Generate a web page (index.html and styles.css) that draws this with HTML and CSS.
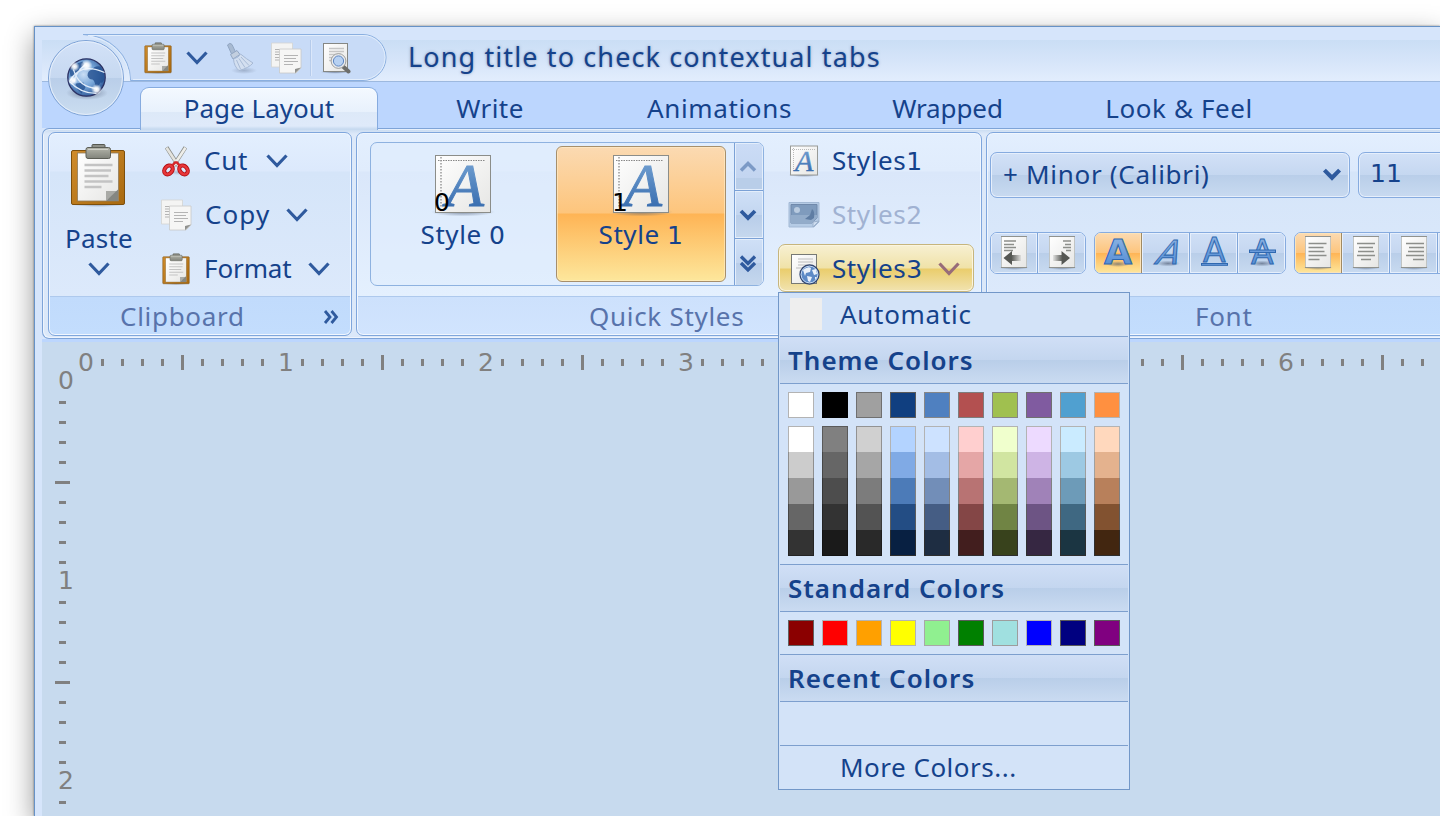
FILE: index.html
```html
<!DOCTYPE html>
<html lang="en">
<head>
<meta charset="utf-8">
<title>Long title to check contextual tabs</title>
<link rel="stylesheet" href="styles.css">
</head>
<body>
<svg class="defs" width="0" height="0" aria-hidden="true">
  <defs>
    <linearGradient id="paper" x1="0" y1="0" x2="1" y2="1"><stop offset="0" stop-color="#ffffff"/><stop offset="1" stop-color="#e6e6e4"/></linearGradient>
    <linearGradient id="board" x1="0" y1="0" x2="1" y2="1"><stop offset="0" stop-color="#d08c2c"/><stop offset="1" stop-color="#a8690f"/></linearGradient>
    <linearGradient id="metal" x1="0" y1="0" x2="0" y2="1"><stop offset="0" stop-color="#b4b5aa"/><stop offset="1" stop-color="#81837b"/></linearGradient>
    <linearGradient id="ink" x1="0" y1="0" x2="0" y2="1"><stop offset="0" stop-color="#7daad8"/><stop offset="1" stop-color="#2c62a8"/></linearGradient>
    <linearGradient id="letter" x1="0" y1="0" x2="0" y2="1"><stop offset="0" stop-color="#92b7e4"/><stop offset="1" stop-color="#4a86d2"/></linearGradient>
    <linearGradient id="fadeL" x1="0" y1="0" x2="1" y2="0"><stop offset=".45" stop-color="#555753"/><stop offset="1" stop-color="#555753" stop-opacity=".1"/></linearGradient>
    <linearGradient id="fadeR" x1="1" y1="0" x2="0" y2="0"><stop offset=".45" stop-color="#555753"/><stop offset="1" stop-color="#555753" stop-opacity=".1"/></linearGradient>
    <linearGradient id="orb" x1="0" y1="0" x2="0" y2="1"><stop offset="0" stop-color="#d3e2f8"/><stop offset=".5" stop-color="#c6d8f0"/><stop offset=".5" stop-color="#b9cee9"/><stop offset="1" stop-color="#cbddf0"/></linearGradient>
    <radialGradient id="sea" cx=".42" cy=".42" r=".65"><stop offset="0" stop-color="#c9def5"/><stop offset=".5" stop-color="#76a5d8"/><stop offset="1" stop-color="#27508f"/></radialGradient>
    <radialGradient id="glow"><stop offset="0" stop-color="#fff"/><stop offset=".4" stop-color="#fff" stop-opacity=".85"/><stop offset="1" stop-color="#fff" stop-opacity="0"/></radialGradient>
    <radialGradient id="shade"><stop offset="0" stop-color="#44516a" stop-opacity=".6"/><stop offset="1" stop-color="#44516a" stop-opacity="0"/></radialGradient>
    <symbol id="i-clipboard" viewBox="0 0 60 64">
      <ellipse cx="30" cy="61" rx="29" ry="3" fill="url(#shade)"/>
      <rect x="3.500" y="7.500" width="53" height="54" rx="1.5" fill="url(#board)" stroke="#7d4f0c"/>
      <rect x="9.500" y="10" width="41" height="48" fill="url(#paper)" stroke="#8f7c5c" stroke-width=".8"/>
      <path d="M16.500 22h28M16.500 27.500h26.500M16.500 33h24M16.500 38.500h28M16.500 44h17" stroke="#c3c3c3" stroke-width="2.400"/>
      <path d="M38 58V48H50.500Z" fill="#a9aaa6"/><path d="M38 58L50 46.500V58Z" fill="#858782"/>
      <rect x="24" y="1.500" width="13" height="6" rx="1" fill="#8f9189" stroke="#55574f"/>
      <rect x="18" y="4.500" width="24.500" height="11" rx="2" fill="url(#metal)" stroke="#5c5e56"/>
      <path d="M20 6.500h20" stroke="#cfd0c8"/>
    </symbol>
    <symbol id="i-copy" viewBox="0 0 32 32">
      <path d="M1.500 1h21v24h-21z" fill="#f4f4f3" stroke="#d4d4d2" stroke-width=".8"/>
      <path d="M5 7.500h11M5 10h11M5 12.500h11M5 15.500h8M5 18h6" stroke="#b4b4b4"/>
      <path d="M9.500 7h21.500v19l-5 5H9.500z" fill="#f6f6f5" stroke="#c9c9c6" stroke-width=".8"/>
      <path d="M14 13.500h14M14 16.500h12M14 19.500h14M14 22.500h9" stroke="#b4b4b4"/>
      <path d="M25 31.200V27l6-1.500z" fill="#90918e"/>
    </symbol>
    <symbol id="i-cut" viewBox="0 0 32 34">
      <ellipse cx="18" cy="29" rx="9" ry="3" fill="url(#shade)" opacity=".5"/>
      <path d="M6 2.500L18.500 22" stroke="#888a85" stroke-width="4.200"/><path d="M26 2.500L13.500 22" stroke="#888a85" stroke-width="4.200"/>
      <path d="M6 3L18.500 22" stroke="#e4e4df" stroke-width="2.800"/><path d="M26 3L13.500 22" stroke="#eeeeea" stroke-width="2.800"/>
      <g fill="none" stroke="#b10f14" stroke-width="4.400"><ellipse cx="8" cy="26.500" rx="3.900" ry="5.200" transform="rotate(42 8 26.500)"/><ellipse cx="24" cy="26.500" rx="3.900" ry="5.200" transform="rotate(-42 24 26.500)"/></g>
      <g fill="none" stroke="#e8373a" stroke-width="2.600"><ellipse cx="8" cy="26.500" rx="3.900" ry="5.200" transform="rotate(42 8 26.500)"/><ellipse cx="24" cy="26.500" rx="3.900" ry="5.200" transform="rotate(-42 24 26.500)"/></g>
      <path d="M12 22l3-3.500h2l3 3.500" fill="none" stroke="#d4262a" stroke-width="2.600"/>
    </symbol>
    <symbol id="i-brush" viewBox="0 0 32 32">
      <ellipse cx="19" cy="28.500" rx="13" ry="3.500" fill="url(#shade)" opacity=".5"/>
      <path d="M2.500 3Q5 0 7 2.500L11 11l-4 2z" fill="#a8bad2" stroke="#91a6c3"/>
      <path d="M5.500 12.500L12 8.500l3 4-7 4.500z" fill="#c3cfdf" stroke="#93a7c3"/>
      <path d="M8.500 17Q14 15.500 15.500 12q6 5 12.500 9-4 5-14 7.500-5-4-5.500-11.500z" fill="#d3dff0" stroke="#a6b9d5"/>
      <path d="M11.500 18l4 9M14 16.500l6 9M16 15l8 8.500" stroke="#a9bbd6" fill="none"/>
    </symbol>
    <symbol id="i-preview" viewBox="0 0 32 32">
      <ellipse cx="15" cy="30" rx="15" ry="1.800" fill="url(#shade)"/>
      <rect x="3.500" y="1.500" width="24" height="28" fill="url(#paper)" stroke="#858784"/>
      <path d="M9 6.500h15M9 9.500h15M9 12.500h12M9 15.500h9M9 18.500h9" stroke="#c6c6c6" stroke-width="1.400"/>
      <path d="M22.500 24l6 5.500" stroke="#6d6e6b" stroke-width="4" stroke-linecap="round"/>
      <circle cx="18.500" cy="19" r="6.300" fill="#b7d1f2" stroke="#e9ebee" stroke-width="2.400"/>
      <circle cx="18.500" cy="19" r="7.400" fill="none" stroke="#8a8c89" stroke-width=".8"/>
      <circle cx="18.500" cy="19" r="5.100" fill="none" stroke="#5d86c2"/>
    </symbol>
    <symbol id="i-style" viewBox="0 0 64 64">
      <ellipse cx="32" cy="59" rx="32" ry="4.500" fill="url(#shade)"/>
      <rect x="4.500" y="2.500" width="55" height="57" fill="url(#paper)" stroke="#8b8d89"/>
      <path d="M7 7.500h47" stroke="#888" stroke-dasharray="1.500 1"/><path d="M10 4v51" stroke="#999" stroke-width="1.500" stroke-dasharray="1.500 1.500"/>
      <text class="serif-a" x="15" y="52.500" font-size="62" fill="url(#ink)" stroke="url(#ink)">A</text>
    </symbol>
    <symbol id="i-style-small" viewBox="0 0 32 32">
      <ellipse cx="16" cy="30" rx="16" ry="2" fill="url(#shade)"/>
      <rect x="2.500" y="1" width="27" height="29" fill="url(#paper)" stroke="#989a97"/>
      <path d="M4 4.500h23M5.500 3v24" stroke="#aaa" stroke-width=".8" stroke-dasharray="1 1"/>
      <text class="serif-a" x="7" y="26" font-size="30" fill="url(#ink)" stroke="url(#ink)" stroke-width=".4">A</text>
    </symbol>
    <symbol id="i-image" viewBox="0 0 32 28">
      <path d="M1 1.500h30V21l-5 5H1z" fill="#b5cbe5" stroke="#a3b9d5"/>
      <path d="M3 3.500h26V17l-5 5H3z" fill="#7f9bbd" stroke="#7089ab"/>
      <path d="M3 14h26v3l-5 5H3z" fill="#93acca"/><circle cx="9" cy="9" r="3" fill="#b9cbe0"/>
      <path d="M17 18l5-4 2-6q3 2 2 9l-3 2z" fill="#5f7da3"/>
      <path d="M25 26v-5l6-1z" fill="#cfdef0" stroke="#9bb0cc"/>
    </symbol>
    <symbol id="i-earth" viewBox="0 0 40 40">
      <circle cx="20" cy="20" r="18.700" fill="url(#sea)" stroke="#2b3163" stroke-width="1.300"/>
      <path d="M21 18q0-5 5-6 2-4 8-3 4 5 4 12-1 5-4 4-3 6-5 3-1-5-3-6-4 0-5-4z" fill="#234f8e" opacity=".8"/>
      <path d="M3 13l5-6 8-3 2 3-5 4-3 6-6 2zM9 26l8-1 2 5-4 6-4-4z" fill="#234f8e" opacity=".75"/>
      <path d="M3 24Q14 4 38 15M7 12Q12 30 31 31M3 24Q14 36 30 36M20 6Q8 16 8 24" fill="none" stroke="#dfebf9" stroke-width="1.200"/>
      <circle cx="20" cy="8" r="6" fill="url(#glow)"/><circle cx="8" cy="9" r="5" fill="url(#glow)"/><circle cx="30" cy="32" r="5.500" fill="url(#glow)"/><circle cx="6.500" cy="23" r="5" fill="url(#glow)"/>
    </symbol>
    <symbol id="i-web" viewBox="0 0 32 32">
      <rect x="3.500" y="1.500" width="25" height="29" fill="url(#paper)" stroke="#777974"/>
      <path d="M10 6h15M10 9h15M10 12h15M8 15h9" stroke="#cfcfcf" stroke-width="1.400"/>
      <circle cx="21.500" cy="21.500" r="9.500" fill="#5d8ac6" stroke="#32466f" stroke-width="1.300"/>
      <circle cx="21.500" cy="21.500" r="8.400" fill="none" stroke="#c5d9f2"/>
      <path d="M15 17q5-4 8-2l-1 4-4 1-1 3zM24 17l4-1 1 5-3 1zM19 23l5 1-2 5-2-1zM27 24l2 0-2 3z" fill="#eaf1fa"/>
    </symbol>
    <symbol id="i-chev" viewBox="0 0 22 14"><path d="M1.500 1.500L11 11.500L20.500 1.500" fill="none" stroke="currentColor" stroke-width="3.200"/></symbol>
    <symbol id="i-chev-s" viewBox="0 0 18 12"><path d="M2 2L9 9L16 2" fill="none" stroke="currentColor" stroke-width="3.800"/></symbol>
    <symbol id="i-page" viewBox="0 0 32 36">
      <ellipse cx="16" cy="32.500" rx="15" ry="2.500" fill="url(#shade)"/>
      <rect x="3.500" y="1.500" width="25" height="31" fill="url(#paper)" stroke="#babcb8" stroke-width=".8"/><path d="M3 1.500h26M3 32.500h26" stroke="#90928e"/>
    </symbol>
  </defs>
</svg>

<div class="window">
  <header class="titlebar">
    <svg class="qat-shape" width="350" height="96" viewBox="41 27 350 96">
      <path d="M83 34.500H363A23 23 0 0 1 363 80.500H130.500A48 46 0 0 0 83 34.500Z" fill="#c8dbf7" stroke="#8aafe0"/>
      <path d="M88 35.500H363A22 22 0 0 1 363 79.500H133" fill="none" stroke="#e3eefc"/>
      <path d="M129.500 80A47 45 0 0 0 90 36.500" fill="none" stroke="#e3eefc"/>
      <circle cx="86" cy="78" r="37.500" fill="url(#orb)" stroke="#7da2d6"/>
      <circle cx="86" cy="78" r="36.400" fill="none" stroke="#e6effb"/>
      <ellipse cx="87" cy="93" rx="21" ry="7" fill="url(#shade)"/>
      <use href="#i-earth" x="66.500" y="57.500" width="40" height="40"/>
      <path d="M310.500 40v36" stroke="#b5cbeb"/><path d="M311.500 40v36" stroke="#dbe7fa"/>
    </svg>
    <div class="qat">
      <svg class="q-paste"><use href="#i-clipboard"/></svg>
      <svg class="chev q-chev"><use href="#i-chev"/></svg>
      <svg class="q-brush"><use href="#i-brush"/></svg>
      <svg class="q-copy"><use href="#i-copy"/></svg>
      <svg class="q-preview"><use href="#i-preview"/></svg>
    </div>
    <h1 class="title">Long title to check contextual tabs</h1>
  </header>

  <nav class="tabs">
    <a class="tab tab-layout selected">Page Layout</a>
    <a class="tab tab-write">Write</a>
    <a class="tab tab-anim">Animations</a>
    <a class="tab tab-wrapped">Wrapped</a>
    <a class="tab tab-look">Look &amp; Feel</a>
  </nav>

  <main class="ribbon">
    <section class="band band-clipboard">
      <div class="band-body">
        <div class="paste">
          <svg class="paste-icon"><use href="#i-clipboard"/></svg>
          <span class="lbl-paste">Paste</span>
          <svg class="chev"><use href="#i-chev"/></svg>
        </div>
        <div class="stack">
          <div class="cmd cmd-cut"><svg class="ic"><use href="#i-cut"/></svg><span>Cut</span><svg class="chev"><use href="#i-chev"/></svg></div>
          <div class="cmd cmd-copy"><svg class="ic"><use href="#i-copy"/></svg><span>Copy</span><svg class="chev"><use href="#i-chev"/></svg></div>
          <div class="cmd cmd-format"><svg class="ic"><use href="#i-clipboard"/></svg><span>Format</span><svg class="chev"><use href="#i-chev"/></svg></div>
        </div>
      </div>
      <div class="band-label"><span>Clipboard</span>
        <svg class="expand" viewBox="0 0 16 16"><path d="M2 2L7 8L2 14M8.500 2L13.500 8L8.500 14" fill="none" stroke="#2f5a9e" stroke-width="2.800"/></svg>
      </div>
    </section>

    <section class="band band-styles">
      <div class="band-body">
        <div class="gallery">
          <div class="style"><svg class="style-icon"><use href="#i-style"/></svg><b class="badge">0</b><span>Style <i class="d">0</i></span></div>
          <div class="style active"><svg class="style-icon"><use href="#i-style"/></svg><b class="badge">1</b><span>Style <i class="d">1</i></span></div>
          <div class="scroller">
            <button class="dim"><svg viewBox="0 0 18 12"><path d="M2 9.500L9 2.500L16 9.500" fill="none" stroke="currentColor" stroke-width="3.500"/></svg></button>
            <button><svg><use href="#i-chev-s"/></svg></button>
            <button><svg class="dbl" viewBox="0 0 18 18"><path d="M2 1.500L9 8.500L16 1.500M2 8L9 15L16 8" fill="none" stroke="currentColor" stroke-width="3.300"/></svg></button>
          </div>
        </div>
        <div class="stylelist">
          <div class="item"><svg class="ic"><use href="#i-style-small"/></svg><span>Styles<i class="d">1</i></span></div>
          <div class="item disabled"><svg class="ic ic-img"><use href="#i-image"/></svg><span>Styles<i class="d">2</i></span></div>
          <div class="item hot"><svg class="ic"><use href="#i-web"/></svg><span>Styles<i class="d">3</i></span><svg class="chev"><use href="#i-chev"/></svg></div>
        </div>
      </div>
      <div class="band-label"><span>Quick Styles</span></div>
    </section>

    <section class="band band-font">
      <div class="band-body">
        <div class="combos">
          <div class="combo family"><span>+ Minor (Calibri)</span><svg><use href="#i-chev-s"/></svg></div>
          <div class="combo size"><i class="d">11</i></div>
        </div>
        <div class="tools">
          <div class="strip">
            <button><svg viewBox="0 0 32 36"><use href="#i-page"/><path d="M6 6h12M6 9.500h10M6 12.500h12M6 15.500h9" stroke="#8d8f8b" stroke-width="1.300"/><path d="M5.500 23L14 16v4h9v6h-9v4z" fill="url(#fadeL)"/></svg></button>
            <button><svg viewBox="0 0 32 36"><use href="#i-page"/><path d="M17 6h8M19 9.500h6M17 12.500h8M20 15.500h5" stroke="#8d8f8b" stroke-width="1.300"/><path d="M24 23L15.500 16v4H7v6h8.500v4z" fill="url(#fadeR)"/></svg></button>
          </div>
          <div class="strip">
            <button class="on"><svg viewBox="0 0 32 36"><ellipse cx="16" cy="29" rx="12" ry="3" fill="url(#shade)"/><text class="fa" x="2" y="29" font-size="33" font-weight="bold" textLength="28" lengthAdjust="spacingAndGlyphs">A</text></svg></button>
            <button><svg viewBox="0 0 32 36"><ellipse cx="18" cy="28.500" rx="12" ry="3" fill="url(#shade)"/><text class="fa" x="0" y="0" font-size="33" transform="translate(3.500 29) skewX(-24)">A</text></svg></button>
            <button><svg viewBox="0 0 32 36"><text class="fa" x="5" y="26.500" font-size="33">A</text><rect x="3.500" y="28.500" width="26" height="1.800" fill="#6b9bdb" stroke="#2f68b0"/></svg></button>
            <button><svg viewBox="0 0 32 36"><ellipse cx="16" cy="28.500" rx="12" ry="3" fill="url(#shade)"/><text class="fa" x="5" y="29" font-size="33">A</text><rect x="3.500" y="15" width="26" height="2.500" fill="#6b9bdb" stroke="#2f68b0"/></svg></button>
          </div>
          <div class="strip">
            <button class="on"><svg viewBox="0 0 32 36"><use href="#i-page"/><path d="M6.500 8.500h18M6.500 12.500h15M6.500 16.500h16M6.500 20.500h18M6.500 24.500h11" stroke="#8d8f8b" stroke-width="1.300"/></svg></button>
            <button><svg viewBox="0 0 32 36"><use href="#i-page"/><path d="M7 8.500h18M9 12.500h14M8 16.500h16M7 20.500h18M11 24.500h10" stroke="#8d8f8b" stroke-width="1.300"/></svg></button>
            <button><svg viewBox="0 0 32 36"><use href="#i-page"/><path d="M8 8.500h18M11 12.500h15M10 16.500h16M8 20.500h18M15 24.500h11" stroke="#8d8f8b" stroke-width="1.300"/></svg></button>
            <button></button>
          </div>
        </div>
      </div>
      <div class="band-label"><span>Font</span></div>
    </section>
  </main>

  <div class="document">
    <div class="ruler ruler-h" id="ruler-h"></div>
    <div class="ruler ruler-v" id="ruler-v"></div>
  </div>

  <aside class="popup">
    <div class="row auto"><i class="chip"></i><span>Automatic</span></div>
    <h2 class="h-theme">Theme Colors</h2>
    <div class="swatches" id="theme"></div>
    <div class="columns" id="shades"></div>
    <h2 class="h-standard">Standard Colors</h2>
    <div class="swatches" id="standard"></div>
    <h2 class="h-recent">Recent Colors</h2>
    <div class="recent"></div>
    <div class="row more"><span>More Colors...</span></div>
  </aside>
</div>
<script src="app.js"></script>
</body>
</html>
```

FILE: styles.css
```css
* { box-sizing: border-box; }
body {
  margin: 0; width: 1440px; height: 816px; overflow: hidden; background: #fff;
  font: 26px/36px "Noto Sans", "Open Sans", "DejaVu Sans", sans-serif; color: #15428b;
}
h1, h2 { margin: 0; font-size: 26px; font-weight: 400; }
svg { display: block; flex: none; }
.defs { position: absolute; }
button { flex: none; margin: 0; padding: 0; border: 0; background: none; color: inherit; }
.d { font-family: "DejaVu Sans", sans-serif; font-style: normal; font-size: 25px; line-height: 0; }
.chev { width: 22px; height: 14px; color: #2f5a9e; }
.ic { width: 32px; height: 32px; }
.serif-a { font-family: "Liberation Serif", serif; font-style: italic; }
.fa { font-family: "DejaVu Sans", sans-serif; fill: url(#letter); stroke: #2f68b0; stroke-width: 1; }

.window {
  position: relative; display: flex; flex-direction: column; width: 1406px; height: 790px; margin: 26px 0 0 34px; padding-left: 7px;
  border: solid #6792c6; border-width: 1px 0 0 1px; background: #d6e5fb;
  box-shadow: 0 0 2px rgba(0,0,0,.45), 0 10px 26px rgba(0,0,0,.42);
}

.titlebar {
  position: relative; z-index: 2; display: flex; flex: none; height: 55px; border-bottom: 1px solid #9db9df;
  background: linear-gradient(#d6e5fb 13px, #cadef5 13px, #d5e4f9 60%, #e2edfd);
}
.qat-shape { position: absolute; left: -1px; top: 0; }
.qat { position: relative; display: flex; align-items: center; width: 366px; height: 62px; padding-left: 101px; }
.q-paste { width: 30px; height: 32px; }
.q-chev { margin-left: 13px; }
.q-brush { width: 32px; height: 32px; margin-left: 17px; }
.q-copy { width: 32px; height: 32px; margin-left: 13px; }
.q-preview { width: 32px; height: 32px; margin-left: 18px; }
.title { padding-top: 12px; font-size: 27px; letter-spacing: 1.12px; text-shadow: 0 0 3px rgba(90,110,150,.55); white-space: nowrap; }

.tabs { display: flex; flex: none; height: 46px; padding: 5px 0 0 98px; background: #bcd6fe; }
.tab { display: block; flex: none; height: 41px; padding-top: 3px; text-align: center; }
.tab.selected {
  position: relative; z-index: 1; height: 43px; width: 238px; border: 1px solid #86abdf; border-bottom: 0; border-radius: 9px 9px 0 0; padding-top: 2px;
  background: linear-gradient(#f4f9ff, #e8f1fc 24px, #dde9f8 24px, #dfeafa 38px, #c7daf0 41px); box-shadow: inset 0 1px #fafdff;
}
.tab-write { width: 224px; letter-spacing: .4px; }
.tab-anim { width: 235px; letter-spacing: .65px; }
.tab-wrapped { width: 221px; letter-spacing: -.1px; }
.tab-look { width: 242px; letter-spacing: .6px; }

.ribbon {
  display: flex; flex: none; gap: 4px; height: 211px; padding: 3px 0 0 5px; border: 1px solid #7ea4d8; border-right: 0; border-radius: 7px 0 0 7px;
  background: linear-gradient(#c7daf0, #dde9f9 5px, #dbe8f9); box-shadow: inset 0 1px #e6effb, inset 1px -1px #eef4fd; overflow: hidden;
}
.band { display: flex; flex: none; flex-direction: column; height: 204px; border: 1px solid #7fa6dc; border-radius: 7px; box-shadow: inset 0 0 0 1px #f0f6fe; overflow: hidden;
  background: linear-gradient(#e3effe, #dce9fc 38px, #d5e5f9 39px, #dce9fb 163px, #c1dbfc 164px, #c3ddfd); }
.band-clipboard { width: 304px; }
.band-styles { width: 626px; background: linear-gradient(#e3effe, #e0ecfc 38px, #dae7fa 39px, #e4f0fe 163px, #cde1fc 164px, #d1e4fe); }
.band-font { width: 480px; }
.band-body { display: flex; height: 163px; }
.band-label { position: relative; display: flex; height: 39px; margin: 0 1px; padding-top: 1px; border-top: 1px solid #aec9ed; color: #5873ab; letter-spacing: .7px; }
.band-clipboard .band-label { padding-left: 70px; }
.band-clipboard .band-label span { width: 203px; }
.band-styles .band-label { padding-left: 231px; }
.band-font .band-label { padding-left: 207px; }
.expand { width: 16px; height: 16px; margin-top: 11px; }

.paste { display: flex; flex-direction: column; align-items: center; width: 100px; padding-top: 10px; }
.paste-icon { width: 60px; height: 64px; margin-left: -2px; }
.lbl-paste { margin-top: 13px; letter-spacing: .2px; }
.paste .chev { margin-top: 6px; }
.stack { padding: 1px 0 0 11px; }
.cmd { display: flex; align-items: center; height: 54px; }
.cmd .ic { margin-right: 12px; }
.cmd span, .item span { position: relative; top: -1px; }
.cmd-cut span { width: 62px; letter-spacing: .7px; }
.cmd-copy span { width: 82px; padding-left: 1px; letter-spacing: 1.1px; }
.cmd-format span { width: 104px; letter-spacing: -.1px; }

.gallery { display: flex; flex: none; width: 394px; height: 144px; margin: 9px 0 0 13px; padding-left: 7px; border: 1px solid #8eb2e0; border-radius: 7px; background: rgba(224,236,253,.6); overflow: hidden; }
.style { position: relative; display: flex; flex: none; flex-direction: column; align-items: center; width: 170px; height: 136px; margin: 3px 8px 0 0; padding-top: 6px; border: 1px solid transparent; border-radius: 6px; }
.style.active { border-color: #a78f6b; box-shadow: inset 0 0 0 1px rgba(255,240,205,.55); background: linear-gradient(#fbdab2, #fdc57c 66px, #feb455 67px, #fde79c); }
.style-icon { width: 64px; height: 64px; margin-left: -1px; }
.style span { margin-top: -1px; letter-spacing: .55px; }
.badge { position: absolute; left: 55px; top: 38px; color: #000; font: 400 25px/36px "DejaVu Sans", sans-serif; }
.scroller { display: flex; flex: 1; flex-direction: column; border-left: 1px solid #7ba1d6; }
.scroller button { display: flex; align-items: center; justify-content: center; height: 48px; border-bottom: 1px solid #7ba1d6; color: #2f5a9e; background: linear-gradient(#cfe0f7, #c3d6f0 50%, #b8cde9 50%, #c6d8ee); box-shadow: inset 0 0 0 1px #e4eefb; }
.scroller button:last-child { border-bottom: 0; }
.scroller svg { width: 18px; height: 12px; margin-right: 2px; }
.scroller .dbl { height: 18px; margin-top: 2px; }
.scroller .dim { color: #7c9ac6; background: linear-gradient(#cbdcf6, #c3d5f0 75%, #b9cee9 75%); }

.stylelist { padding: 1px 0 0 14px; }
.item { display: flex; align-items: center; width: 196px; height: 54px; padding-left: 10px; }
.item .ic { margin-right: 12px; }
.item span { width: 107px; letter-spacing: .6px; }
.ic-img { height: 28px; }
.item.disabled { color: #a1b2d2; }
.item.hot { height: 48px; margin-top: 2px; padding: 2px 0 0 9px; border: 1px solid #c6b57d; border-radius: 7px; background: linear-gradient(#f7f0d2, #f0e2a8 23px, #eacd6c 24px, #f1e3b0); box-shadow: inset 0 0 0 1px #fbf5df; }
.item.hot .chev { margin-left: -1px; color: #986c79; }

.band-font .band-body { flex-direction: column; padding: 19px 0 0 3px; }
.combos { display: flex; gap: 8px; }
.combo { display: flex; flex: none; align-items: center; height: 46px; padding-bottom: 2px; border: 1px solid #86abdf; border-radius: 7px; background: linear-gradient(#d2e1f7, #c5d7f0 50%, #b9cee9 50%, #c8daf0); box-shadow: inset 0 0 0 1px #e6effc; }
.combo.family { width: 360px; padding-left: 12px; letter-spacing: .7px; }
.combo svg { width: 20px; height: 13px; margin-left: auto; margin-right: 7px; color: #2f5a9e; }
.combo.size { width: 120px; padding-left: 11px; }
.tools { display: flex; gap: 8px; margin-top: 34px; }
.strip { display: flex; flex: none; height: 42px; border: 1px solid #86abdf; border-radius: 7px; overflow: hidden; }
.strip button { display: flex; justify-content: center; width: 48px; height: 40px; border-right: 1px solid #7fa5d9; background: linear-gradient(#cfdff6, #c5d7f0 50%, #b9cee9 50%, #c8daf0); box-shadow: inset 0 0 0 1px #e6effc; }
.strip button:first-child, .strip button:last-child { width: 47px; }
.strip button:last-child { border-right: 0; }
.strip .on { border-color: #a08a63; background: linear-gradient(#fbdab2, #fdc57c 50%, #feb455 50%, #fde79c); box-shadow: inset 0 0 0 1px #fce3b8; }
.strip svg { width: 32px; height: 36px; margin-top: 2px; overflow: visible; }

.document { position: relative; flex: 1; border-top: 3px solid #bcd6fe; background: #c7daee; color: #808080; font: 25px/0 "DejaVu Sans", sans-serif; overflow: hidden; }
.ruler { display: flex; }
.ruler div { display: flex; flex: none; }
.ruler b { flex: none; font-weight: 400; }
.ruler i { flex: none; background: #808080; }
.ruler-h { width: 1398px; height: 41px; padding-left: 39px; overflow: hidden; }
.ruler-h div { width: 200px; height: 41px; align-items: center; }
.ruler-h b { width: 20px; text-indent: -3px; }
.ruler-h i { width: 3px; height: 7px; margin-right: 17px; }
.ruler-h i.major { height: 15px; }
.ruler-v { flex-direction: column; width: 40px; margin-top: -2px; }
.ruler-v div { flex-direction: column; width: 40px; height: 200px; align-items: center; }
.ruler-v b { height: 20px; margin-left: 8px; }
.ruler-v i { width: 7px; height: 3px; margin-bottom: 17px; }
.ruler-v i.major { width: 15px; }

.popup { position: absolute; z-index: 3; left: 743px; top: 265px; width: 352px; height: 498px; padding: 0 1px; border: 1px solid #7297c8; background: #d3e3f8; letter-spacing: .7px; }
.row { display: flex; align-items: center; }
.auto { height: 44px; padding: 0 0 2px 10px; border-bottom: 1px solid #7d9fce; }
.chip { width: 32px; height: 32px; margin-right: 18px; background: #eee; }
.popup h2 { height: 47px; padding: 5px 0 0 8px; border-bottom: 1px solid #7d9fce; font-weight: 600; letter-spacing: 1px; background: linear-gradient(#d0dff6, #c4d6ef 50%, #b9cee9 50%, #cadbf1); }
.swatches, .columns { display: flex; gap: 8px; padding: 8px; }
.columns { padding-top: 0; border-bottom: 1px solid #7d9fce; }
#standard { border-bottom: 1px solid #7d9fce; }
.swatches i { width: 26px; height: 26px; border: 1px solid; }
.columns div { width: 26px; }
.columns i { display: block; height: 26px; border: 0 solid; border-width: 0 1px; }
.columns i:first-child { border-top-width: 1px; }
.columns i:last-child { border-bottom-width: 1px; }
.recent { height: 44px; border-bottom: 1px solid #7d9fce; }
.more { height: 43px; padding: 0 0 2px 60px; letter-spacing: .5px; }
```

FILE: app.js
```js
const theme = ["ffffff", "000000", "a0a0a0", "103f80", "4f80c0", "b35050", "a0c04f", "805ba0", "50a0d0", "ff9040"];
const standard = ["8b0000", "ff0000", "ffa000", "ffff00", "90f090", "008000", "a0e0e0", "0000ff", "000080", "800080"];
const shades = [
  ["ffffff", "cccccc", "999999", "666666", "333333"],
  ["808080", "666666", "4d4d4d", "333333", "1a1a1a"],
  ["d0d0d0", "a6a6a6", "7c7c7c", "535353", "292929"],
  ["b3d3ff", "80aae5", "4c7bb8", "234d84", "082042"],
  ["cde2ff", "a3bde5", "728eb8", "455d84", "1e2d42"],
  ["ffcfcf", "e5a6a6", "b87373", "844646", "421e1e"],
  ["f0ffcd", "d1e5a1", "a4b872", "708444", "38421c"],
  ["eddaff", "ceb4e5", "a082b8", "6d5484", "362742"],
  ["caebff", "9dc9e3", "6d9bb8", "3f6882", "1b3542"],
  ["ffd8bd", "e4b28e", "b8805b", "825230", "422610"]
];

// The outline is a grey at 70% of the brightest channel.
function swatch(hex) {
  const el = document.createElement("i");
  const max = Math.max(...hex.match(/../g).map(h => parseInt(h, 16)));
  const g = Math.round(max * 0.7);
  el.style.backgroundColor = "#" + hex;
  el.style.borderColor = `rgb(${g},${g},${g})`;
  return el;
}

document.getElementById("theme").append(...theme.map(swatch));
document.getElementById("standard").append(...standard.map(swatch));
document.getElementById("shades").append(...shades.map(list => {
  const col = document.createElement("div");
  col.append(...list.map(swatch));
  return col;
}));

// Each unit is a label followed by nine ticks; units under the popup stay unlabelled.
function ruler(id, labels) {
  const root = document.getElementById(id);
  for (const text of labels) {
    const unit = document.createElement("div");
    const label = document.createElement("b");
    label.textContent = text;
    unit.append(label);
    for (let t = 1; t < 10; t++) {
      const tick = document.createElement("i");
      if (t === 5) tick.className = "major";
      unit.append(tick);
    }
    root.append(unit);
  }
}
ruler("ruler-h", ["0", "1", "2", "3", "", "", "6"]);
ruler("ruler-v", ["0", "1", "2"]);
```
